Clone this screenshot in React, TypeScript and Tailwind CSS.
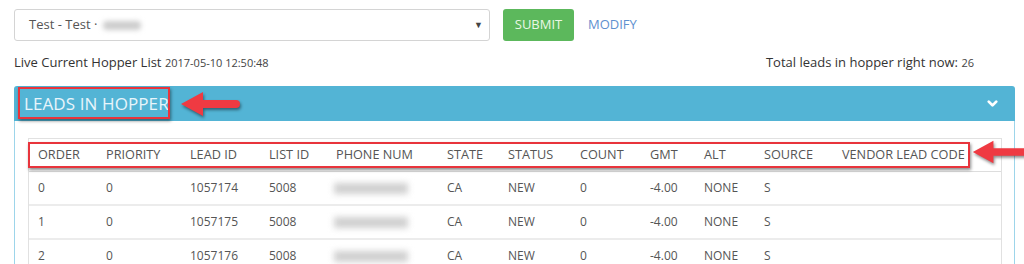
import { ChevronDown } from 'lucide-react';

const cols = ['ORDER', 'PRIORITY', 'LEAD ID', 'LIST ID', 'PHONE NUM', 'STATE', 'STATUS', 'COUNT', 'GMT', 'ALT', 'SOURCE', 'VENDOR LEAD CODE'];

const rows = [
    ['0', '0', '1057174', '5008', '', 'CA', 'NEW', '0', '-4.00', 'NONE', 'S', ''],
    ['1', '0', '1057175', '5008', '', 'CA', 'NEW', '0', '-4.00', 'NONE', 'S', ''],
    ['2', '0', '1057176', '5008', '', 'CA', 'NEW', '0', '-4.00', 'NONE', 'S', ''],
];

const grid = 'grid grid-cols-[68px_84px_79px_67px_111px_61px_72px_70px_54px_60px_78px_1fr] pl-[9px] items-center';

function Arrow({ className }: { className: string }) {
    return (
        <svg className={className} viewBox="0 0 64 30" style={{ filter: 'drop-shadow(1px 2px 1.5px rgba(0,0,0,0.45))' }}>
            <path d="M3 15 L25 3 L25 11 L58 11 Q62 11 62 15 Q62 19 58 19 L25 19 L25 27 Z" fill="#ef3a42" />
        </svg>
    );
}

export default function App() {
    return (
        <div className="relative w-[1024px] h-[264px] overflow-hidden bg-white font-['Open_Sans',sans-serif] text-[#555]">
            {/* Campaign select */}
            <div className="flex items-center pl-[14px] pt-[9px]">
                <div className="flex items-center justify-between w-[476px] h-[32px] border border-[#d4d4d4] rounded-[3px] pl-[14px] pr-[6px] text-[13px] text-[#555]">
                    <div className="flex items-center">
                        <span>Test - Test ·</span>
                        <span className="ml-[6px] w-[38px] h-[9px] bg-[#cdcdcd] blur-[2.5px] rounded-sm" />
                    </div>
                    <span className="text-[9px] text-[#444]">▼</span>
                </div>
                <button className="ml-[13px] w-[71px] h-[32px] rounded-[3px] bg-[#5cb85c] text-[13px] text-[#eaf7e4]">SUBMIT</button>
                <span className="ml-[14px] text-[13px] text-[#5e90cf]">MODIFY</span>
            </div>

            {/* Info line */}
            <div className="flex items-center justify-between pl-[14px] pr-[50px] mt-[12px] h-[20px] text-[13px] text-[#333]">
                <span>
                    Live Current Hopper List <span className="text-[11px] text-[#444]">2017-05-10 12:50:48</span>
                </span>
                <span>
                    Total leads in hopper right now: <span className="text-[11px] text-[#444]">26</span>
                </span>
            </div>

            {/* Panel */}
            <div className="ml-[14px] mt-[13px] w-[1001px]">
                <div className="flex items-center justify-between h-[35px] bg-[#53b4d5] rounded-t-[3px] pl-[10px] pr-[15px]">
                    <span className="text-[17px] text-[#e8f5fb] tracking-[0.1px]">LEADS IN HOPPER</span>
                    <ChevronDown className="w-[15px] h-[15px] text-white" strokeWidth={4.5} />
                </div>
                <div className="border-x border-[#9dd5ea] pl-[13px] pr-[12px] pt-[17px] h-[200px]">
                    <div className="border border-[#e1e1e1] text-[12px] text-[#555]">
                        <div className={`${grid} h-[33px] border-b border-[#ddd] text-[12.7px]`}>
                            {cols.map((c) => (
                                <span key={c} className="whitespace-nowrap">{c}</span>
                            ))}
                        </div>
                        {rows.map((r, i) => (
                            <div key={i} className={`${grid} h-[34px] border-b-2 border-[#ececec]`}>
                                {r.map((v, j) =>
                                    j === 4 ? (
                                        <span key={j} className="block w-[74px] h-[11px] -ml-[2px] bg-[#d0d0d0] blur-[3px]" />
                                    ) : (
                                        <span key={j}>{v}</span>
                                    )
                                )}
                            </div>
                        ))}
                    </div>
                </div>
            </div>

            {/* Annotations */}
            <div className="absolute left-[18px] top-[87px] w-[152px] h-[32px] border-2 border-[#e8343c] shadow-[1px_2px_3px_rgba(0,0,0,0.45)]" />
            <Arrow className="absolute left-[176px] top-[89px] w-[68px] h-[30px]" />
            <div className="absolute left-[28px] top-[142px] w-[942px] h-[26px] border-2 border-[#e8343c] shadow-[1px_2px_3px_rgba(0,0,0,0.45)]" />
            <Arrow className="absolute left-[970px] top-[137px] w-[60px] h-[30px]" />
        </div>
    );
}
